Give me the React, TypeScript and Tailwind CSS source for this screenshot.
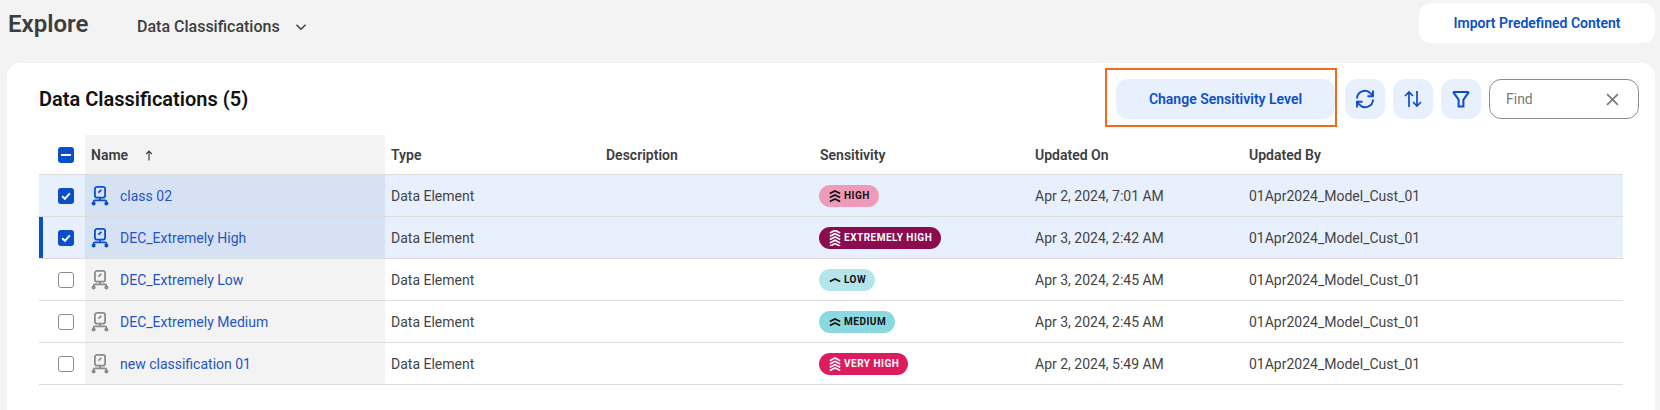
const FONT = 'font-["Roboto","Liberation_Sans",sans-serif]';

const ROWS = [
  { name: 'class 02', level: 'HIGH', count: 3, badge: 'bg-[#ee9bb9] text-[#111111]', on: 'Apr 2, 2024, 7:01 AM', checked: true, active: false },
  { name: 'DEC_Extremely High', level: 'EXTREMELY HIGH', count: 5, badge: 'bg-[#8a0c4f] text-white', on: 'Apr 3, 2024, 2:42 AM', checked: true, active: true },
  { name: 'DEC_Extremely Low', level: 'LOW', count: 1, badge: 'bg-[#b3e5eb] text-[#111111]', on: 'Apr 3, 2024, 2:45 AM', checked: false, active: false },
  { name: 'DEC_Extremely Medium', level: 'MEDIUM', count: 2, badge: 'bg-[#8ad9e0] text-[#111111]', on: 'Apr 3, 2024, 2:45 AM', checked: false, active: false },
  { name: 'new classification 01', level: 'VERY HIGH', count: 4, badge: 'bg-[#dc1c5f] text-white', on: 'Apr 2, 2024, 5:49 AM', checked: false, active: false },
];

const GRID = 'grid grid-cols-[46px_300px_215px_214px_215px_214px_1fr]';

const Chevrons = ({ count }: { count: number }) => {
  const gap = count > 3 ? 3.3 : 4;
  const start = (16 - (count - 1) * gap) / 2 + 0.2;
  return (
    <svg width="12" height="16" viewBox="0 0 12 16" fill="none" stroke="currentColor" strokeWidth="1.7">
      {Array.from({ length: count }).map((_, i) => {
        const y = start + i * gap;
        return <path key={i} d={`M0.8 ${y + 1.4}L6 ${y - 1.2}L11.2 ${y + 1.4}`} />;
      })}
    </svg>
  );
};

const ClassIcon = ({ color }: { color: string }) => (
  <svg width="18" height="20" viewBox="0 0 18 20" fill="none" stroke={color} strokeWidth="1.8" className="shrink-0">
    <rect x="3.9" y="0.9" width="10.2" height="10.8" rx="2.2" />
    <path d="M7.4 6.6L10.4 3.8" strokeWidth="1.8" />
    <path d="M9 11.7V14.4" />
    <path d="M2.6 16V15.8C2.6 15 3.2 14.4 4 14.4H14C14.8 14.4 15.4 15 15.4 15.8V16" />
    <circle cx="2.6" cy="17.6" r="2" fill={color} stroke="none" />
    <circle cx="15.4" cy="17.6" r="2" fill={color} stroke="none" />
  </svg>
);

const Checkbox = ({ checked }: { checked: boolean }) =>
  checked ? (
    <span className="w-4 h-4 rounded-[3px] bg-[#0b4fc8] flex items-center justify-center">
      <svg width="12" height="12" viewBox="0 0 12 12" fill="none" stroke="white" strokeWidth="2">
        <path d="M2.2 6.2L4.9 8.8L9.8 3.4" />
      </svg>
    </span>
  ) : (
    <span className="w-4 h-4 rounded-[3px] bg-white border border-[#8c8c8c]" />
  );

const IconButton = ({ children }: { children: React.ReactNode }) => (
  <button className="w-10 h-10 rounded-[12px] bg-[#e9f0fd] flex items-center justify-center text-[#0b4fc8]">
    {children}
  </button>
);

const HeaderCell = ({ label }: { label: string }) => (
  <div className="pl-[6px] pt-px flex items-center text-[14px] font-semibold text-[#3d3d3d]">{label}</div>
);

const App = () => {
  return (
    <div className={`${FONT} w-[1660px] h-[410px] overflow-hidden bg-[#f3f3f3] flex flex-col`}>
      {/* top bar */}
      <div className="h-[63px] flex items-start pl-2 pr-[5px]">
        <h1 className="text-2xl leading-[48px] font-semibold text-[#3d3d3d] w-[129px]">Explore</h1>
        <div className="h-[53px] flex items-center gap-[15px] text-[16px] font-medium text-[#3d3d3d]">
          Data Classifications
          <svg width="12" height="12" viewBox="0 0 12 12" fill="none" stroke="#3d3d3d" strokeWidth="1.5">
            <path d="M1.5 3.8L6 8.2L10.5 3.8" />
          </svg>
        </div>
        <button className="ml-auto mt-[3px] w-[236px] h-10 rounded-[12px] bg-white text-[14px] font-semibold text-[#0b4fc8]">
          Import Predefined Content
        </button>
      </div>

      {/* card */}
      <div className="ml-[7px] mr-[5px] flex-1 bg-white rounded-t-[14px] px-8">
        <div className="h-[72px] flex items-start">
          <h2 className="text-xl leading-[73px] font-semibold text-[#111111]">Data Classifications (5)</h2>
          <div className="ml-auto -mr-4 flex items-start mt-[5px] gap-2">
            <div className="w-[232px] h-[59px] border-2 border-[#f26a1b] pl-[9px] pt-[9px]">
              <button className="w-[219px] h-10 rounded-[12px] bg-[#e9f0fd] text-[14px] font-semibold text-[#0b4fc8]">
                Change Sensitivity Level
              </button>
            </div>
            <div className="flex gap-2 mt-[11px]">
              <IconButton>
                <svg width="20" height="20" viewBox="0 0 20 20" fill="none" stroke="currentColor" strokeWidth="1.9">
                  <path d="M2 9.5A7.8 7.8 0 0 1 15.6 4.4L18 6.8" />
                  <path d="M18 1.6V7.2H12.4" />
                  <path d="M18 10.5A7.8 7.8 0 0 1 4.4 15.6L2 13.2" />
                  <path d="M2 18.4V12.8H7.6" />
                </svg>
              </IconButton>
              <IconButton>
                <svg width="18" height="18" viewBox="0 0 18 18" fill="none" stroke="currentColor" strokeWidth="1.7">
                  <path d="M5 17V2M1 6L5 2L9 6" />
                  <path d="M13 1V16M9 12L13 16L17 12" />
                </svg>
              </IconButton>
              <IconButton>
                <svg width="18" height="18" viewBox="0 0 18 18" fill="none" stroke="currentColor" strokeWidth="2">
                  <path d="M2.2 2H15.8C16.4 2 16.6 2.5 16.3 2.9L11.4 9.6V16.5H6.6V9.6L1.7 2.9C1.4 2.5 1.6 2 2.2 2Z" />
                </svg>
              </IconButton>
              <div className="w-[150px] h-10 rounded-[12px] border border-[#8c8c8c] bg-white flex items-center pl-4 pr-[19px] text-[14px] text-[#7a7a7a]">
                Find
                <svg className="ml-auto" width="13" height="13" viewBox="0 0 12 12" fill="none" stroke="#7a7a7a" strokeWidth="1.6">
                  <path d="M1 1L11 11M11 1L1 11" />
                </svg>
              </div>
            </div>
          </div>
        </div>

        {/* table */}
        <div className={`${GRID} h-10 border-b border-[#dcdcdc]`}>
          <div className="flex items-center pl-[19px]">
            <span className="w-4 h-4 rounded-[3px] bg-[#0b4fc8] flex items-center justify-center">
              <span className="w-[10px] h-[2px] bg-white" />
            </span>
          </div>
          <div className="bg-[#f3f3f3] pl-[6px] pt-px flex items-center gap-[17px] text-[14px] font-semibold text-[#3d3d3d]">
            Name
            <svg width="8" height="11" viewBox="0 0 8 11" fill="none" stroke="#3d3d3d" strokeWidth="1.2">
              <path d="M4 10.5V1.5M1.2 4L4 1.2L6.8 4" />
            </svg>
          </div>
          <HeaderCell label="Type" />
          <HeaderCell label="Description" />
          <HeaderCell label="Sensitivity" />
          <HeaderCell label="Updated On" />
          <HeaderCell label="Updated By" />
        </div>

        {ROWS.map((row) => (
          <div
            key={row.name}
            className={`${GRID} h-[42px] border-b border-[#dcdcdc] text-[14px] text-[#444444] ${row.checked ? 'bg-[#e9f0fd]' : 'bg-white'}`}
          >
            <div className={`flex items-center ${row.active ? 'border-l-4 border-[#0b4fc8] pl-[15px]' : 'pl-[19px]'}`}>
              <Checkbox checked={row.checked} />
            </div>
            <div className={`pl-[6px] flex items-center gap-[11px] ${row.checked ? 'bg-[#d6e1f4]' : 'bg-[#f3f3f3]'}`}>
              <ClassIcon color={row.checked ? '#0b4fc8' : '#8c8c8c'} />
              <span className="text-[#1f55c4] pt-[2px]">{row.name}</span>
            </div>
            <div className="pl-[6px] pt-[2px] flex items-center">Data Element</div>
            <div />
            <div className="pl-[5px] flex items-center">
              <span className={`h-[22px] rounded-full pl-[10px] pr-[9px] flex items-center gap-[3px] text-[10px] font-bold tracking-[0.5px] ${row.badge}`}>
                <Chevrons count={row.count} />
                {row.level}
              </span>
            </div>
            <div className="pl-[6px] pt-[2px] flex items-center">{row.on}</div>
            <div className="pl-[6px] pt-[2px] flex items-center">01Apr2024_Model_Cust_01</div>
          </div>
        ))}
      </div>
    </div>
  );
};

export default App;
